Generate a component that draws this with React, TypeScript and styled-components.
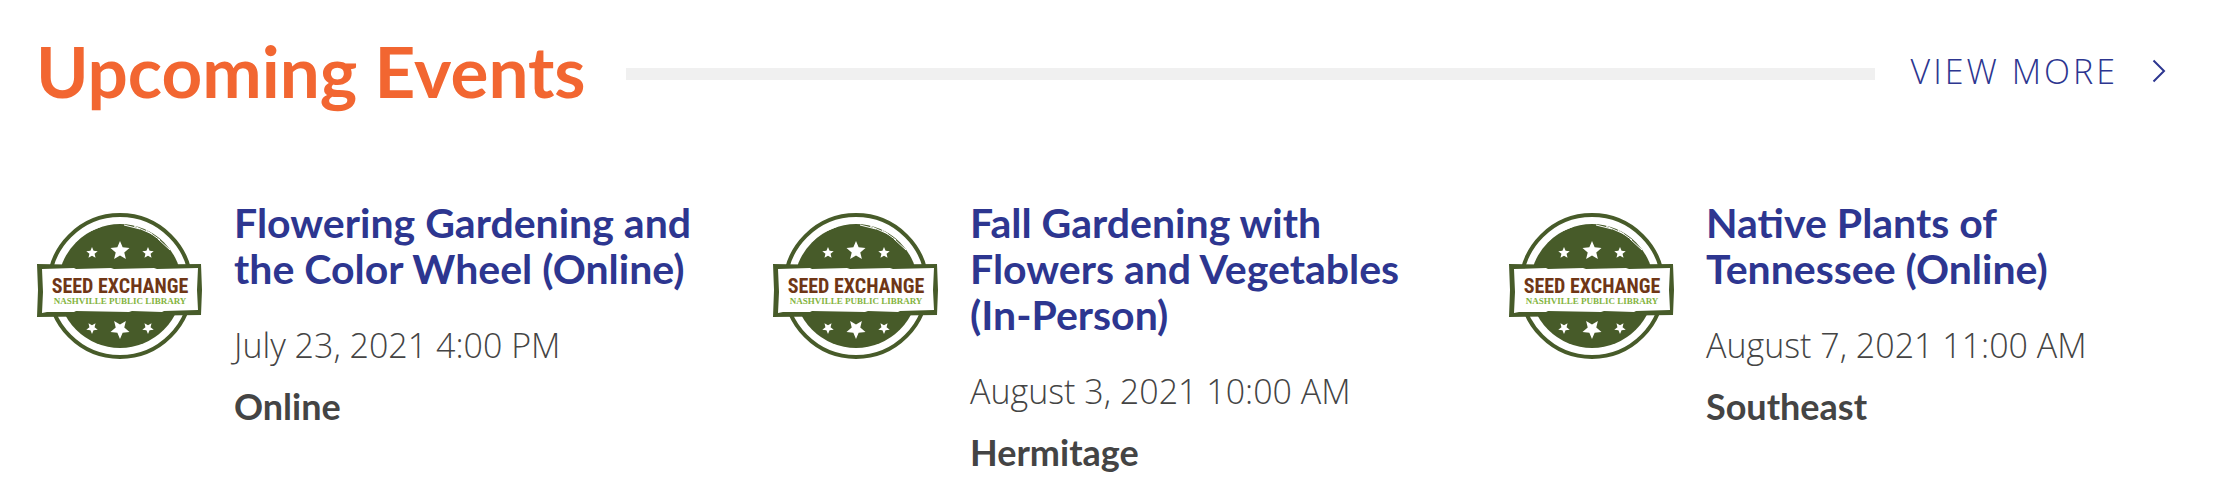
import React from "react";
import styled, { createGlobalStyle } from "styled-components";

const GlobalStyle = createGlobalStyle`
  * { box-sizing: border-box; }
  body {
    margin: 0;
    background: #fff;
    color: #444;
    font-family: Lato, "Open Sans", sans-serif;
  }
`;

const Section = styled.section`
  padding: 31px 58px 24px 36px;
`;

const Header = styled.header`
  display: flex;
  align-items: center;
  padding-right: 14px;
`;

const Heading = styled.h2`
  margin: 0;
  color: #f26631;
  font-size: 71px;
  font-weight: 700;
  line-height: 80px;
  white-space: nowrap;
`;

const Rule = styled.div`
  flex: 1;
  height: 12px;
  margin: 6px 36px 0 40px;
  background: #f0f0f0;
`;

const ViewMore = styled.a`
  display: flex;
  align-items: center;
  gap: 34px;
  color: #2d3690;
  font-family: "Open Sans", sans-serif;
  font-size: 34px;
  font-weight: 350;
  line-height: 40px;
  letter-spacing: 3px;
  text-decoration: none;
  white-space: nowrap;
`;

const Events = styled.ul`
  display: grid;
  grid-template-columns: repeat(3, 1fr);
  gap: 64px;
  margin: 0;
  padding: 89px 0 0;
  list-style: none;
`;

const Event = styled.li`
  display: flex;
  align-items: flex-start;
  gap: 31px;
`;

const Badge = styled.svg`
  flex: none;
  width: 167px;
  height: 148px;
  margin-top: 12px;
`;

const Details = styled.div`
  flex: 1;
  min-width: 0;
`;

const Title = styled.h3`
  margin: 0 0 31px;
  font-size: 41px;
  font-weight: 700;
  line-height: 46px;
`;

const TitleLink = styled.a`
  color: #2d3690;
  text-decoration: none;
`;

const When = styled.p`
  margin: 0 0 17px;
  font-family: "Open Sans", sans-serif;
  font-size: 34px;
  font-weight: 350;
  line-height: 44px;
`;

const Where = styled.p`
  margin: 0;
  font-size: 36px;
  font-weight: 700;
  line-height: 44px;
`;

const starPoints = (cx: number, cy: number, r: number, flip = 1) =>
  Array.from({ length: 10 }, (_, i) => {
    const radius = i % 2 ? r * 0.45 : r;
    const angle = (Math.PI / 5) * i;
    return `${(cx + radius * Math.sin(angle)).toFixed(2)},${(cy - flip * radius * Math.cos(angle)).toFixed(2)}`;
  }).join(" ");

const SeedExchangeBadge = () => (
  <Badge viewBox="0 0 167 148" role="img" aria-label="Seed Exchange, Nashville Public Library">
    <circle cx="84" cy="74" r="71" fill="#fff" stroke="#475b29" strokeWidth="4" />
    <circle cx="84" cy="74" r="62" fill="#475b29" />
    <path
      d="M88 13 L104 17 M98 14 L116 22 M110 18 L124 28 M122 27 L134 38 M54 19 L66 14 M37 32 L48 22 M30 111 L40 121 M112 131 L126 122"
      stroke="#fff"
      strokeWidth="1"
      fill="none"
    />
    <path d="M1 52 L60 53 L165 52 L166 78 L165 103 L92 104 L1 105 L2 78Z" fill="#475b29" />
    <path
      d="M6 57 L38 56 L40 57 L75 56 L78 57 L118 56 L121 57 L162 56 L161 78 L162 98 L128 99 L126 100 L96 99 L93 100 L40 99 L38 100 L11 100 L6 101 L7 80Z"
      fill="#fff"
    />
    <g fill="#fff">
      <polygon points={starPoints(84, 39, 10)} />
      <polygon points={starPoints(56, 41, 6)} />
      <polygon points={starPoints(112, 41, 6)} />
      <polygon points={starPoints(84, 117, 10, -1)} />
      <polygon points={starPoints(56, 116, 6, -1)} />
      <polygon points={starPoints(112, 116, 6, -1)} />
    </g>
    <text
      x="84"
      y="81"
      textAnchor="middle"
      fill="#6f3616"
      fontFamily="'Roboto Condensed', 'Liberation Sans Narrow', Roboto, sans-serif"
      fontSize="20"
      fontWeight="700"
    >
      SEED EXCHANGE
    </text>
    <text
      x="84"
      y="92"
      textAnchor="middle"
      fill="#84b440"
      fontFamily="'Liberation Serif', serif"
      fontSize="9"
      fontWeight="700"
    >
      NASHVILLE PUBLIC LIBRARY
    </text>
  </Badge>
);

const Chevron = () => (
  <svg width="14" height="24" viewBox="0 0 14 24" fill="none" stroke="currentColor" strokeWidth="2" aria-hidden="true">
    <path d="M1.5 1.5 L12 12 L1.5 22.5" />
  </svg>
);

const events = [
  { title: "Flowering Gardening and the Color Wheel (Online)", when: "July 23, 2021 4:00 PM", where: "Online" },
  { title: "Fall Gardening with Flowers and Vegetables (In-Person)", when: "August 3, 2021 10:00 AM", where: "Hermitage" },
  { title: "Native Plants of Tennessee (Online)", when: "August 7, 2021 11:00 AM", where: "Southeast" },
];

export default function App() {
  return (
    <>
      <GlobalStyle />
      <Section>
        <Header>
          <Heading>Upcoming Events</Heading>
          <Rule />
          <ViewMore href="#events">
            VIEW MORE
            <Chevron />
          </ViewMore>
        </Header>
        <Events>
          {events.map((event) => (
            <Event key={event.title}>
              <SeedExchangeBadge />
              <Details>
                <Title>
                  <TitleLink href="#event">{event.title}</TitleLink>
                </Title>
                <When>{event.when}</When>
                <Where>{event.where}</Where>
              </Details>
            </Event>
          ))}
        </Events>
      </Section>
    </>
  );
}
